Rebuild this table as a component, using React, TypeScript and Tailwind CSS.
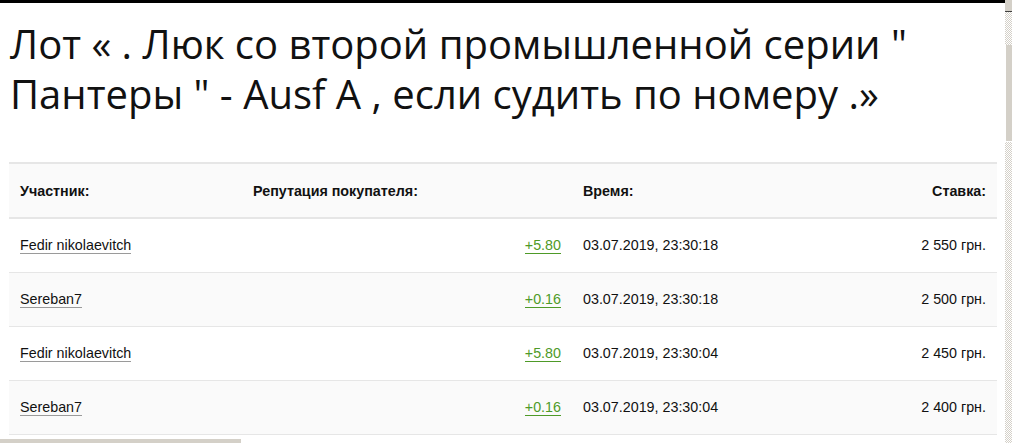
import React from 'react';

const bids = [
  { name: 'Fedir nikolaevitch', rep: '+5.80', time: '03.07.2019, 23:30:18', bet: '2 550 грн.' },
  { name: 'Sereban7', rep: '+0.16', time: '03.07.2019, 23:30:18', bet: '2 500 грн.' },
  { name: 'Fedir nikolaevitch', rep: '+5.80', time: '03.07.2019, 23:30:04', bet: '2 450 грн.' },
  { name: 'Sereban7', rep: '+0.16', time: '03.07.2019, 23:30:04', bet: '2 400 грн.' },
];

const cols = 'grid grid-cols-[233px_330px_209px_216px] items-center h-[53px]';

export default function App() {
  return (
    <div className="flex h-[443px] w-[1012px] overflow-hidden bg-white">
      {/* Page */}
      <div className="flex flex-col w-[1005px]">
        <div className="h-[3px] bg-black" />
        <h1
          className="mt-[16px] pl-[10px] pr-[60px] text-[40px] leading-[50px] text-[#111] font-normal"
          style={{ fontFamily: '"Open Sans", sans-serif' }}
        >
          Лот « . Люк со второй промышленной серии " Пантеры " - Ausf A , если судить по номеру .»
        </h1>

        {/* Bids table */}
        <div
          className="mt-[43px] ml-[9px] w-[988px] text-[14.3px] text-[#111]"
          style={{ fontFamily: '"Liberation Sans", Arial, sans-serif' }}
        >
          <div className={`${cols} bg-[#fafafa] border-y-2 border-[#e6e6e6] h-[57px] pt-[2px] font-bold`}>
            <div className="pl-[11px]">Участник:</div>
            <div className="pl-[11px]">Репутация покупателя:</div>
            <div className="pl-[11px]">Время:</div>
            <div className="pr-[11px] text-right">Ставка:</div>
          </div>
          {bids.map((b, i) => (
            <div
              key={i}
              className={`${cols} border-b border-[#e6e6e6] h-[54px] pt-[1px] ${i % 2 ? 'bg-[#fafafa]' : 'bg-white'}`}
            >
              <div className="pl-[11px]">
                <span className="border-b border-[#9a9a9a] leading-[16px] inline-block">{b.name}</span>
              </div>
              <div className="pr-[11px] text-right">
                <span className="text-[#4e9a28] border-b border-[#4e9a28] leading-[16px] inline-block">{b.rep}</span>
              </div>
              <div className="pl-[11px]">{b.time}</div>
              <div className="pr-[11px] text-right">{b.bet}</div>
            </div>
          ))}
        </div>

        <div className="mt-auto h-[4px] w-[241px] bg-[#d4d0c8]" />
      </div>

      {/* Vertical scrollbar */}
      <div className="flex flex-col w-[7px] bg-[repeating-conic-gradient(#d4d0c8_0_25%,#ffffff_0_50%)] bg-[length:2px_2px]">
        <div className="h-[12px] bg-[#d4d0c8] border-b border-[#404040]" />
        <div className="mt-[33px] h-[97px] bg-[#d4d0c8] border-l border-white border-b border-[#404040]" />
      </div>
    </div>
  );
}
